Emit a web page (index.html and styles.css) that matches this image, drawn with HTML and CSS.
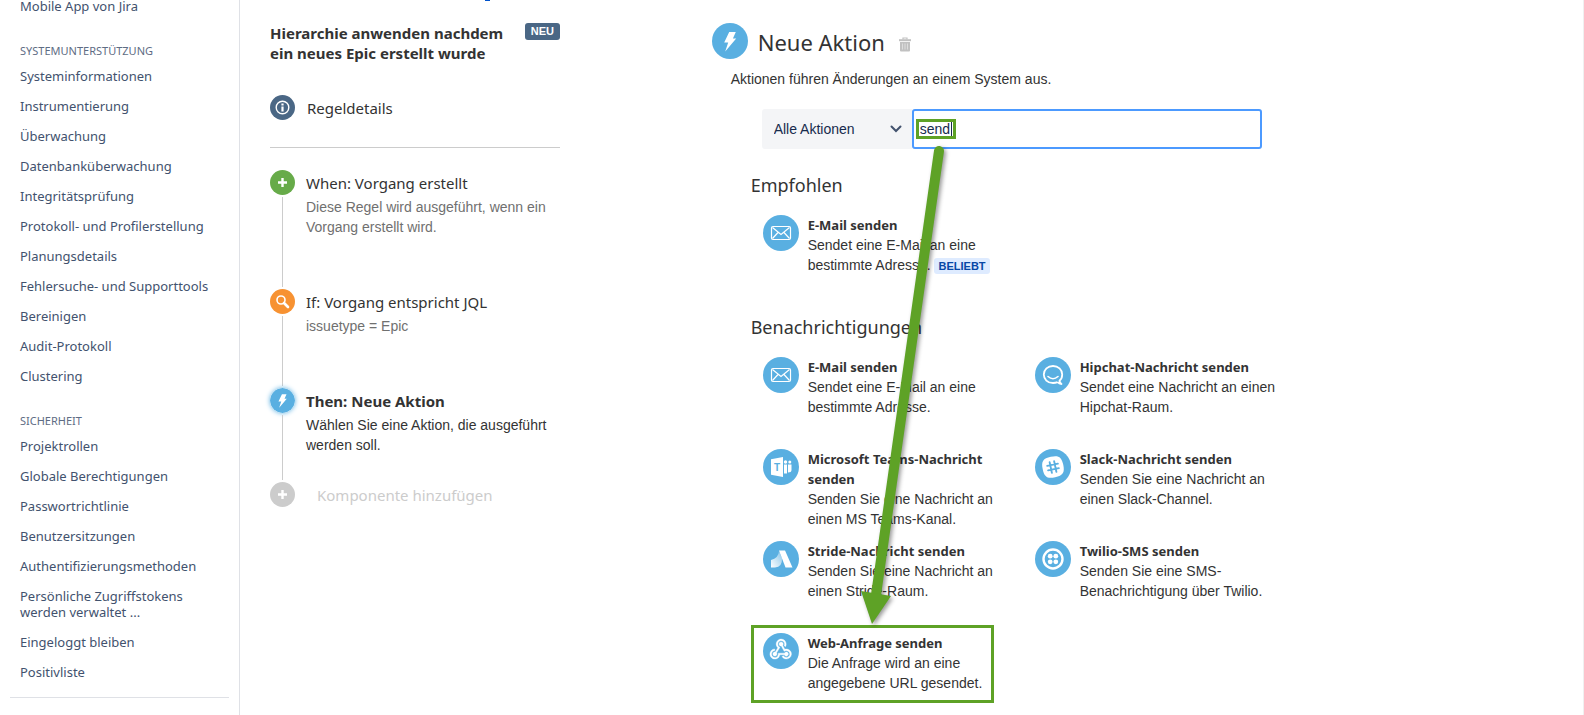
FILE: index.html
```html
<!DOCTYPE html>
<html lang="de">
<head>
    <meta charset="UTF-8">
    <meta name="viewport" content="width=device-width, initial-scale=1.0">
    <title>Automatisierung - Neue Aktion</title>
    <link rel="stylesheet" href="styles.css">
</head>
<body>
    <div class="page">
        <nav class="sidebar">
            <ul class="nav-list">
                <li><a href="#">Mobile App von Jira</a></li>
            </ul>
            <h3 class="nav-heading">Systemunterstützung</h3>
            <ul class="nav-list">
                <li><a href="#">Systeminformationen</a></li>
                <li><a href="#">Instrumentierung</a></li>
                <li><a href="#">Überwachung</a></li>
                <li><a href="#">Datenbanküberwachung</a></li>
                <li><a href="#">Integritätsprüfung</a></li>
                <li><a href="#">Protokoll- und Profilerstellung</a></li>
                <li><a href="#">Planungsdetails</a></li>
                <li><a href="#">Fehlersuche- und Supporttools</a></li>
                <li><a href="#">Bereinigen</a></li>
                <li><a href="#">Audit-Protokoll</a></li>
                <li><a href="#">Clustering</a></li>
            </ul>
            <h3 class="nav-heading">Sicherheit</h3>
            <ul class="nav-list">
                <li><a href="#">Projektrollen</a></li>
                <li><a href="#">Globale Berechtigungen</a></li>
                <li><a href="#">Passwortrichtlinie</a></li>
                <li><a href="#">Benutzersitzungen</a></li>
                <li><a href="#">Authentifizierungsmethoden</a></li>
                <li><a href="#">Persönliche Zugriffstokens werden verwaltet ...</a></li>
                <li><a href="#">Eingeloggt bleiben</a></li>
                <li><a href="#">Positivliste</a></li>
            </ul>
            <hr class="nav-divider">
        </nav>

        <section class="rule">
            <span class="link-edge"></span>
            <header class="rule-header">
                <h2>Hierarchie anwenden nachdem ein neues Epic erstellt wurde</h2>
                <span class="badge-new">NEU</span>
            </header>
            <a class="rule-details" href="#">
                <svg class="dot" viewBox="0 0 25 25">
                    <circle cx="12.5" cy="12.5" r="12.5" fill="#4a6785"/>
                    <circle cx="12.5" cy="12.5" r="6.3" fill="none" stroke="#fff" stroke-width="1.4"/>
                    <path d="M11.4 8.6h2.2v1.8h-2.2zM11.4 11.4h2.2v5h-2.2z" fill="#fff"/>
                </svg>
                <span>Regeldetails</span>
            </a>
            <ol class="steps">
                <li class="step">
                    <div class="rail">
                        <svg class="dot" viewBox="0 0 25 25">
                            <circle cx="12.5" cy="12.5" r="12.5" fill="#67ab49"/>
                            <path d="M12.5 8v9M8 12.5h9" stroke="#fff" stroke-width="2.4"/>
                        </svg>
                    </div>
                    <div class="step-text">
                        <h4>When: Vorgang erstellt</h4>
                        <p>Diese Regel wird ausgeführt, wenn ein Vorgang erstellt wird.</p>
                    </div>
                </li>
                <li class="step">
                    <div class="rail">
                        <svg class="dot" viewBox="0 0 25 25">
                            <circle cx="12.5" cy="12.5" r="12.5" fill="#f79232"/>
                            <circle cx="11" cy="11" r="4" fill="none" stroke="#fff" stroke-width="1.6"/>
                            <path d="M14 14l4 4" stroke="#fff" stroke-width="2.6" stroke-linecap="round"/>
                        </svg>
                    </div>
                    <div class="step-text">
                        <h4>If: Vorgang entspricht JQL</h4>
                        <p>issuetype = Epic</p>
                    </div>
                </li>
                <li class="step active">
                    <div class="rail">
                        <svg class="dot" viewBox="0 0 36 36">
                            <circle cx="18" cy="18" r="18" fill="#59afe1"/>
                            <path d="M17.2 9H23.8L20.9 15.4H24.2L13.2 28.6L16.2 19.6H12.2Z" fill="#fff"/>
                        </svg>
                    </div>
                    <div class="step-text">
                        <h4>Then: Neue Aktion</h4>
                        <p>Wählen Sie eine Aktion, die ausgeführt werden soll.</p>
                    </div>
                </li>
            </ol>
            <button class="add-component" type="button">
                <svg class="dot" viewBox="0 0 25 25">
                    <circle cx="12.5" cy="12.5" r="12.5" fill="#ccc"/>
                    <path d="M12.5 8v9M8 12.5h9" stroke="#fff" stroke-width="2.4"/>
                </svg>
                <span>Komponente hinzufügen</span>
            </button>
        </section>

        <main class="editor">
            <header class="editor-header">
                <svg class="icon" viewBox="0 0 36 36">
                    <circle cx="18" cy="18" r="18" fill="#59afe1"/>
                    <path d="M17.2 9H23.8L20.9 15.4H24.2L13.2 28.6L16.2 19.6H12.2Z" fill="#fff"/>
                </svg>
                <h1>Neue Aktion</h1>
                <button class="trash" type="button" aria-label="Löschen">
                    <svg viewBox="0 0 12 15">
                        <path d="M4 2.5V1h4v1.5" fill="none" stroke="#c1c1c1" stroke-width="1.2"/>
                        <path d="M0 2.2h12v2H0z" fill="#c1c1c1"/>
                        <path d="M1 5h10v8.5q0 1-1 1H2q-1 0-1-1z" fill="#c1c1c1"/>
                        <path d="M3.5 6.5v6M6 6.5v6M8.5 6.5v6" stroke="#ddd" stroke-width="1"/>
                    </svg>
                </button>
            </header>
            <p class="intro">Aktionen führen Änderungen an einem System aus.</p>

            <form class="filter">
                <div class="select-wrap">
                    <select aria-label="Kategorie">
                        <option>Alle Aktionen</option>
                    </select>
                    <svg class="chevron" viewBox="0 0 12 8"><path d="M1.5 1.5L6 6l4.500-4.500" fill="none" stroke="#42526e" stroke-width="2" stroke-linecap="round"/></svg>
                </div>
                <div class="search-wrap">
                    <input type="text" aria-label="Aktion suchen" value="send">
                    <span class="marker"></span>
                    <svg class="arrow" viewBox="0 0 60 490">
                        <path d="M47 15L-16 459" stroke="#5ea226" stroke-width="10" stroke-linecap="round"/>
                        <path d="M-31 455L-1 460L-20 488Z" fill="#5ea226"/>
                    </svg>
                </div>
            </form>

            <section class="group">
                <h2>Empfohlen</h2>
                <div class="tiles">
                    <a class="tile" href="#">
                        <svg class="icon" viewBox="0 0 36 36">
                            <circle cx="18" cy="18" r="18" fill="#59afe1"/>
                            <g fill="none" stroke="#fff" stroke-width="1.2"><rect x="8.5" y="11.5" width="19" height="13" rx="1.5"/><path d="M9.5 12.5L18 19.5L26.5 12.5M9.5 23.5L15 17.5M26.5 23.5L21 17.5"/></g>
                        </svg>
                        <div>
                            <h3>E-Mail senden</h3>
                            <p>Sendet eine E-Mail an eine bestimmte Adresse. <span class="badge-popular">BELIEBT</span></p>
                        </div>
                    </a>
                </div>
            </section>

            <section class="group">
                <h2>Benachrichtigungen</h2>
                <div class="tiles">
                    <a class="tile" href="#">
                        <svg class="icon" viewBox="0 0 36 36">
                            <circle cx="18" cy="18" r="18" fill="#59afe1"/>
                            <g fill="none" stroke="#fff" stroke-width="1.2"><rect x="8.5" y="11.5" width="19" height="13" rx="1.5"/><path d="M9.5 12.5L18 19.5L26.5 12.5M9.5 23.5L15 17.5M26.5 23.5L21 17.5"/></g>
                        </svg>
                        <div>
                            <h3>E-Mail senden</h3>
                            <p>Sendet eine E-Mail an eine bestimmte Adresse.</p>
                        </div>
                    </a>
                    <a class="tile" href="#">
                        <svg class="icon" viewBox="0 0 36 36">
                            <circle cx="18" cy="18" r="18" fill="#59afe1"/>
                            <path d="M22.5 25.2Q20.500 26 18 26C12.500 26 8.800 22.300 8.800 17.500S12.800 9 18 9S27.200 12.700 27.200 17.500Q27.200 21.500 24.500 23.700Q24.700 25.800 26.500 27Q24.200 27 22.500 25.200" fill="none" stroke="#fff" stroke-width="1.8" stroke-linejoin="round"/>
                            <path d="M13 19.5Q18 24 23 19.5" fill="none" stroke="#fff" stroke-width="1.6" stroke-linecap="round"/>
                        </svg>
                        <div>
                            <h3>Hipchat-Nachricht senden</h3>
                            <p>Sendet eine Nachricht an einen Hipchat-Raum.</p>
                        </div>
                    </a>
                    <a class="tile" href="#">
                        <svg class="icon" viewBox="0 0 36 36">
                            <circle cx="18" cy="18" r="18" fill="#59afe1"/>
                            <path d="M8 10.200L20 8v20L8 25.800z" fill="#fff"/>
                            <text x="14" y="22" class="teams-letter">T</text>
                            <g fill="#fff"><circle cx="22.500" cy="13" r="1.700"/><circle cx="26.800" cy="13" r="1.500"/><path d="M21 15.500h3v9h-3zM25 15.500h3.500v5.500q0 2.500-3.500 2.500z"/></g>
                        </svg>
                        <div>
                            <h3>Microsoft Teams-Nachricht senden</h3>
                            <p>Senden Sie eine Nachricht an einen MS Teams-Kanal.</p>
                        </div>
                    </a>
                    <a class="tile" href="#">
                        <svg class="icon" viewBox="0 0 36 36">
                            <circle cx="18" cy="18" r="18" fill="#59afe1"/>
                            <g transform="rotate(-12 18 18)">
                                <path d="M18 7.500C26 7.500 28.500 10 28.500 18S26 28.500 18 28.500S7.500 26 7.500 18S10 7.500 18 7.500Z" fill="#fff"/>
                                <path d="M15.700 12.500v11M20.300 12.500v11M12.500 15.700h11M12.500 20.300h11" stroke="#59afe1" stroke-width="1.900" stroke-linecap="round"/>
                            </g>
                        </svg>
                        <div>
                            <h3>Slack-Nachricht senden</h3>
                            <p>Senden Sie eine Nachricht an einen Slack-Channel.</p>
                        </div>
                    </a>
                    <a class="tile" href="#">
                        <svg class="icon" viewBox="0 0 36 36">
                            <defs>
                                <linearGradient id="stride" x1="0" y1="1" x2="1" y2="0">
                                    <stop offset="0" stop-color="#fff"/>
                                    <stop offset="1" stop-color="#fff" stop-opacity="0.3"/>
                                </linearGradient>
                            </defs>
                            <circle cx="18" cy="18" r="18" fill="#59afe1"/>
                            <path d="M16 9.500H22L29.500 26.500H22.500Z" fill="#fff"/>
                            <path d="M16 10.500Q15.500 17 8 19V26.500H12Q19.500 26 19 17Z" fill="url(#stride)"/>
                        </svg>
                        <div>
                            <h3>Stride-Nachricht senden</h3>
                            <p>Senden Sie eine Nachricht an einen Stride-Raum.</p>
                        </div>
                    </a>
                    <a class="tile" href="#">
                        <svg class="icon" viewBox="0 0 36 36">
                            <circle cx="18" cy="18" r="18" fill="#59afe1"/>
                            <circle cx="18" cy="18" r="9.5" fill="none" stroke="#fff" stroke-width="2.4"/>
                            <g fill="#fff"><circle cx="15.2" cy="15.2" r="2.4"/><circle cx="20.8" cy="15.2" r="2.4"/><circle cx="15.2" cy="20.8" r="2.4"/><circle cx="20.8" cy="20.8" r="2.4"/></g>
                        </svg>
                        <div>
                            <h3>Twilio-SMS senden</h3>
                            <p>Senden Sie eine SMS-Benachrichtigung über Twilio.</p>
                        </div>
                    </a>
                    <a class="tile selected" href="#">
                        <svg class="icon" viewBox="0 0 36 36">
                            <circle cx="18" cy="18" r="18" fill="#59afe1"/>
                            <g transform="translate(4.5 3) scale(1.1)" fill="#fff" stroke="#fff" stroke-width="0.3">
                                <path d="M10.460 19C9 21.070 6.150 21.590 4.090 20.150C2.040 18.710 1.560 15.840 3 13.750C3.870 12.500 5.210 11.830 6.580 11.770L6.630 13.200C5.720 13.270 4.840 13.740 4.270 14.560C3.270 16 3.580 17.940 4.950 18.910C6.330 19.870 8.260 19.500 9.260 18.070C9.570 17.620 9.750 17.130 9.820 16.630V15.620L15.400 15.580L15.470 15.470C16 14.550 17.150 14.230 18.050 14.750C18.950 15.270 19.260 16.430 18.730 17.350C18.200 18.260 17.040 18.580 16.140 18.060C15.730 17.830 15.440 17.460 15.310 17.040L11.240 17.060C11.130 17.730 10.870 18.380 10.460 19M17.740 11.860C20.270 12.170 22.070 14.440 21.760 16.930C21.450 19.430 19.150 21.200 16.620 20.890C15.130 20.710 13.900 19.860 13.190 18.680L14.430 17.960C14.920 18.730 15.750 19.280 16.750 19.410C18.500 19.620 20.050 18.430 20.260 16.760C20.470 15.090 19.230 13.560 17.500 13.350C16.960 13.290 16.440 13.360 15.970 13.530L15.120 13.970L12.540 9.200H12.320C11.260 9.160 10.410 8.290 10.440 7.250C10.470 6.210 11.400 5.400 12.450 5.440C13.500 5.500 14.330 6.350 14.300 7.390C14.280 7.830 14.110 8.230 13.840 8.540L15.740 12.050C16.360 11.850 17.040 11.780 17.740 11.860M8.250 9.140C7.250 6.790 8.310 4.100 10.620 3.120C12.940 2.140 15.620 3.250 16.620 5.600C17.210 6.970 17.090 8.470 16.420 9.670L15.180 8.950C15.600 8.140 15.670 7.150 15.270 6.220C14.590 4.620 12.780 3.850 11.230 4.500C9.670 5.160 8.970 7 9.650 8.600C9.930 9.260 10.400 9.770 10.970 10.110L11.360 10.320L8.290 15.310C8.320 15.360 8.360 15.420 8.390 15.500C8.880 16.410 8.540 17.560 7.620 18.050C6.710 18.540 5.560 18.180 5.060 17.240C4.570 16.310 4.910 15.160 5.830 14.670C6.220 14.460 6.650 14.410 7.060 14.500L9.370 10.730C8.900 10.300 8.500 9.760 8.250 9.140Z"/>
                            </g>
                        </svg>
                        <div>
                            <h3>Web-Anfrage senden</h3>
                            <p>Die Anfrage wird an eine angegebene URL gesendet.</p>
                        </div>
                    </a>
                </div>
            </section>
        </main>
    </div>
</body>
</html>
```
FILE: styles.css
```css
* { box-sizing: border-box; }
body {
    margin: 0;
    height: 100vh;
    overflow: hidden;
    background: #fff;
    color: #333;
    font-family: "Liberation Sans", Arial, sans-serif;
    font-size: 14px;
    line-height: 20px;
}
h1, h2, h3, h4, p, ul, ol { margin: 0; padding: 0; }
h1, h2, h3, h4, .sidebar, .rule-details, .add-component { font-family: "Segoe UI", "Noto Sans", sans-serif; }
ul, ol { list-style: none; }
a { color: inherit; text-decoration: none; }
button { border: 0; padding: 0; background: none; cursor: pointer; }
svg { display: block; flex: none; }

.page {
    display: grid;
    grid-template-columns: 240px 1fr 2fr;
    height: 100vh;
    border-right: 1px solid #f0f0f0;
}

/* admin navigation */
.sidebar { padding: 0 10px; border-right: 1px solid #dfe1e6; }
.nav-list:first-child { margin-top: -9px; }
.nav-list a { display: block; padding: 7px 10px; color: #42526e; font-size: 13px; line-height: 16px; }
.nav-heading { padding: 21px 10px 1px; color: #5e6c84; font-size: 11px; font-weight: 400; line-height: 18px; text-transform: uppercase; }
.nav-divider { margin: 10px 0 0; border: 0; border-top: 1px solid #dfe1e6; }

/* rule overview */
.rule { padding-left: 30px; width: 320px; }
.link-edge { display: block; width: 5px; height: 1px; margin-left: 215px; background: #0052cc; }
.rule-header { display: flex; justify-content: space-between; align-items: flex-start; padding-top: 22px; }
.rule-header h2 { width: 240px; font-size: 15px; line-height: 20px; }
.badge-new { padding: 0 6px; border-radius: 3px; background: #4a6785; color: #fff; font-size: 11px; font-weight: 700; line-height: 17px; }
.rule-details { display: flex; align-items: center; gap: 12px; margin-top: 32px; padding-bottom: 27px; border-bottom: 1px solid #ccc; font-size: 15px; }
.dot { width: 25px; height: 25px; }
.steps { padding-top: 22px; }
.step { display: flex; gap: 11px; }
.rail { display: flex; flex-direction: column; align-items: center; gap: 2px; width: 25px; padding-bottom: 2px; }
.rail::after { content: ""; flex: 1; width: 1px; background: #ccc; }
.step-text { flex: 1; padding: 3px 0 52px; }
.step h4 { padding-bottom: 3px; font-size: 15px; font-weight: 400; line-height: 21px; }
.step p { color: #707070; }
.step.active h4 { font-weight: 700; }
.step.active p { color: #333; }
.step.active .step-text { padding-bottom: 27px; }
.step.active .dot { border-radius: 50%; box-shadow: 0 0 5px #59afe1; }
.add-component { display: flex; align-items: center; gap: 22px; color: #ccc; font-size: 15px; }

/* action picker */
.editor { padding: 23px 24px 0; }
.icon { width: 36px; height: 36px; }
.editor-header { display: flex; align-items: center; gap: 10px; }
.editor-header h1 { padding-top: 2px; font-size: 22px; font-weight: 400; line-height: 34px; }
.trash { margin-left: 4px; padding-top: 6px; }
.trash svg { width: 12px; height: 15px; }
.intro { padding: 10px 0 20px 19px; }
.filter { display: flex; width: 500px; margin: 0 0 8px 50px; }
.select-wrap { position: relative; width: 150px; }
.select-wrap select { width: 100%; height: 40px; padding: 0 12px; border: 0; border-radius: 3px 0 0 3px; background: #f4f5f7; color: #172b4d; font: inherit; appearance: none; }
.chevron { position: absolute; top: 16px; right: 10px; width: 12px; height: 8px; }
.search-wrap { position: relative; flex: 1; }
.search-wrap input { width: 100%; height: 40px; padding: 0 6px; border: 2px solid #4c9aff; border-radius: 3px; background: #fff; color: #172b4d; font: inherit; outline: 0; }
.marker { position: absolute; top: 10px; left: 4px; width: 40px; height: 20px; padding-right: 1px; border: 3px solid #5ea226; }
.marker::after { content: ""; display: block; width: 1px; height: 14px; margin-left: auto; background: #172b4d; }
.arrow { position: absolute; z-index: 1; top: 27px; left: -20px; width: 60px; height: 490px; overflow: visible; pointer-events: none; filter: drop-shadow(2px 2px 2px rgba(0, 0, 0, 0.4)); }

.group { padding: 14px 0 0 39px; }
.group h2 { font-size: 18px; font-weight: 400; line-height: 28px; }
.tiles { display: grid; grid-template-columns: 243px 243px; column-gap: 29px; padding-top: 8px; }
.tile { display: flex; gap: 9px; height: 78px; margin-bottom: 14px; padding: 5px 0 0 9px; border: 3px solid transparent; }
.tile h3 { font-size: 13px; line-height: 20px; }
.tile h3, .tile p { width: 200px; }
.tile.selected { border-color: #5ea226; }
.badge-popular { display: inline-block; padding: 0 4px; border-radius: 3px; background: #deebff; color: #0747a6; font-size: 11px; font-weight: 700; line-height: 16px; }
.teams-letter { fill: #59afe1; font: 700 10px "Liberation Sans", Arial, sans-serif; text-anchor: middle; }
```
